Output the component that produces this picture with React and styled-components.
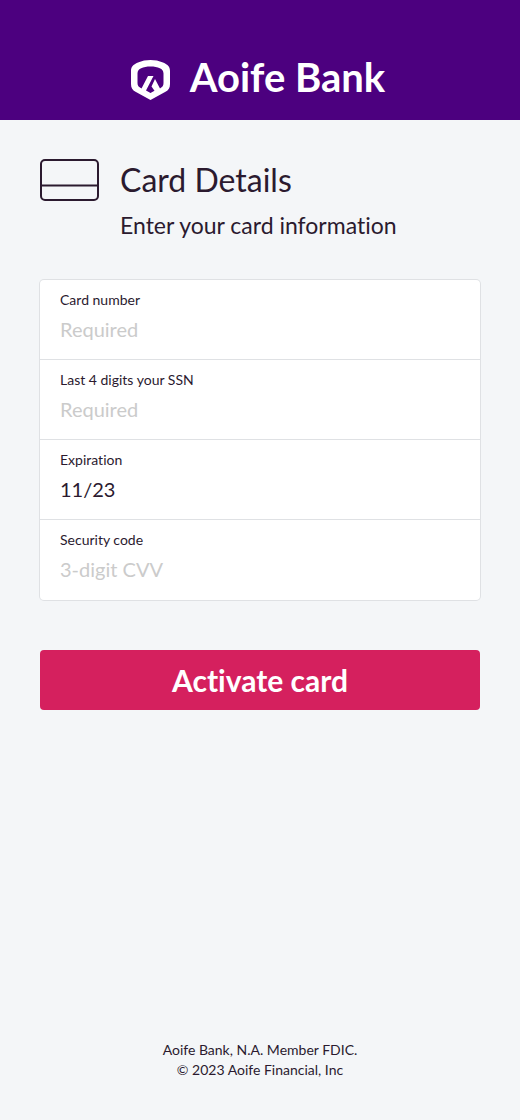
import styled, { createGlobalStyle } from "styled-components";

const GlobalStyle = createGlobalStyle`
  * {
    box-sizing: border-box;
  }

  body {
    margin: 0;
    background: #f4f6f8;
    color: #2b1a2f;
    font-family: Lato, "Open Sans", sans-serif;
    font-variant-ligatures: none;
  }
`;

const Page = styled.div`
  display: flex;
  flex-direction: column;
  min-height: 100vh;
`;

const Header = styled.header`
  display: flex;
  align-items: flex-start;
  justify-content: center;
  gap: 20px;
  padding: 60px 24px 20px 20px;
  background: #4c007f;
  color: #fff;
`;

const BrandName = styled.span`
  font-size: 40px;
  font-weight: 700;
  line-height: 34px;
`;

const Main = styled.main`
  flex: 1;
  padding: 40px;
`;

const Intro = styled.section`
  display: flex;
  align-items: flex-start;
  gap: 20px;
  margin-bottom: 40px;
`;

const Title = styled.h1`
  margin: 0;
  font-size: 32px;
  font-weight: 400;
  line-height: 40px;
`;

const Subtitle = styled.p`
  margin: 10px 0 0;
  font-size: 23px;
  line-height: 30px;
`;

const Fields = styled.div`
  margin-bottom: 50px;
  border-radius: 4px;
  background: #fff;
  box-shadow: 0 0 0 1px #dfe1e4;
`;

const Field = styled.div`
  display: flex;
  flex-direction: column;
  gap: 4px;
  height: 80px;
  padding: 10px 20px;

  & + & {
    box-shadow: 0 -1px 0 #dfe1e4;
  }
`;

const Label = styled.label`
  font-size: 14px;
  line-height: 20px;
`;

const Input = styled.input`
  width: 100%;
  height: 30px;
  padding: 0;
  border: 0;
  outline: 0;
  background: transparent;
  color: inherit;
  font-family: inherit;
  font-size: 20px;

  &::placeholder {
    color: #cbcbcb;
    opacity: 1;
  }
`;

const Button = styled.button`
  width: 100%;
  height: 60px;
  border: 0;
  border-radius: 4px;
  background: #d5205e;
  color: #fff;
  font-family: inherit;
  font-size: 30px;
  font-variant-ligatures: none;
  font-weight: 700;
  cursor: pointer;
`;

const Footer = styled.footer`
  padding: 0 40px 40px;
  font-size: 14px;
  line-height: 20px;
  text-align: center;
`;

const CardSvg = styled.svg`
  flex: none;
  overflow: visible;
`;

const fields = [
  { id: "card-number", label: "Card number", placeholder: "Required" },
  { id: "ssn", label: "Last 4 digits your SSN", placeholder: "Required" },
  { id: "expiration", label: "Expiration", value: "11/23" },
  { id: "cvv", label: "Security code", placeholder: "3-digit CVV" },
];

const Logo = () => (
  <svg width="39" height="40" viewBox="0 0 39 40" aria-hidden="true">
    <path
      fill="#fff"
      fillRule="evenodd"
      d="M19.5 0C24 0 28 .8 32 2.5C37 4.6 39 7 39 11V24C39 28 37.5 30 34.5 31.8L19.5 40L4.5 31.8C1.5 30 0 28 0 24V11C0 7 2 4.6 7 2.5C11 .8 15 0 19.5 0ZM10.5 28.5L17 16H22.5L15 30.5L19.5 33L23.5 30.8L20.5 26.5L24 19L29 28.5C31.5 27 32.5 25.5 32.5 23V13.5C32.5 8.5 27 6.5 19.5 6.5C12 6.5 6.5 8.5 6.5 13.5V23C6.5 25.5 7.5 27 10.5 28.5Z"
    />
  </svg>
);

const CardIcon = () => (
  <CardSvg width="60" height="40" viewBox="0 0 60 40" aria-hidden="true">
    <g fill="none" stroke="#2b1a2f" strokeWidth="2">
      <rect x="1" y="0" width="57" height="40" rx="4" />
      <path d="M1 25.5H58" />
    </g>
  </CardSvg>
);

const App = () => {
  return (
    <Page>
      <GlobalStyle />
      <Header>
        <Logo />
        <BrandName>Aoife Bank</BrandName>
      </Header>
      <Main>
        <Intro>
          <CardIcon />
          <div>
            <Title>Card Details</Title>
            <Subtitle>Enter your card information</Subtitle>
          </div>
        </Intro>
        <form onSubmit={(e) => e.preventDefault()}>
          <Fields>
            {fields.map(({ id, label, placeholder, value }) => (
              <Field key={id}>
                <Label htmlFor={id}>{label}</Label>
                <Input
                  id={id}
                  type="text"
                  placeholder={placeholder}
                  defaultValue={value}
                />
              </Field>
            ))}
          </Fields>
          <Button type="submit">Activate card</Button>
        </form>
      </Main>
      <Footer>
        <div>Aoife Bank, N.A. Member FDIC.</div>
        <div>© 2023 Aoife Financial, Inc</div>
      </Footer>
    </Page>
  );
};

export default App;
